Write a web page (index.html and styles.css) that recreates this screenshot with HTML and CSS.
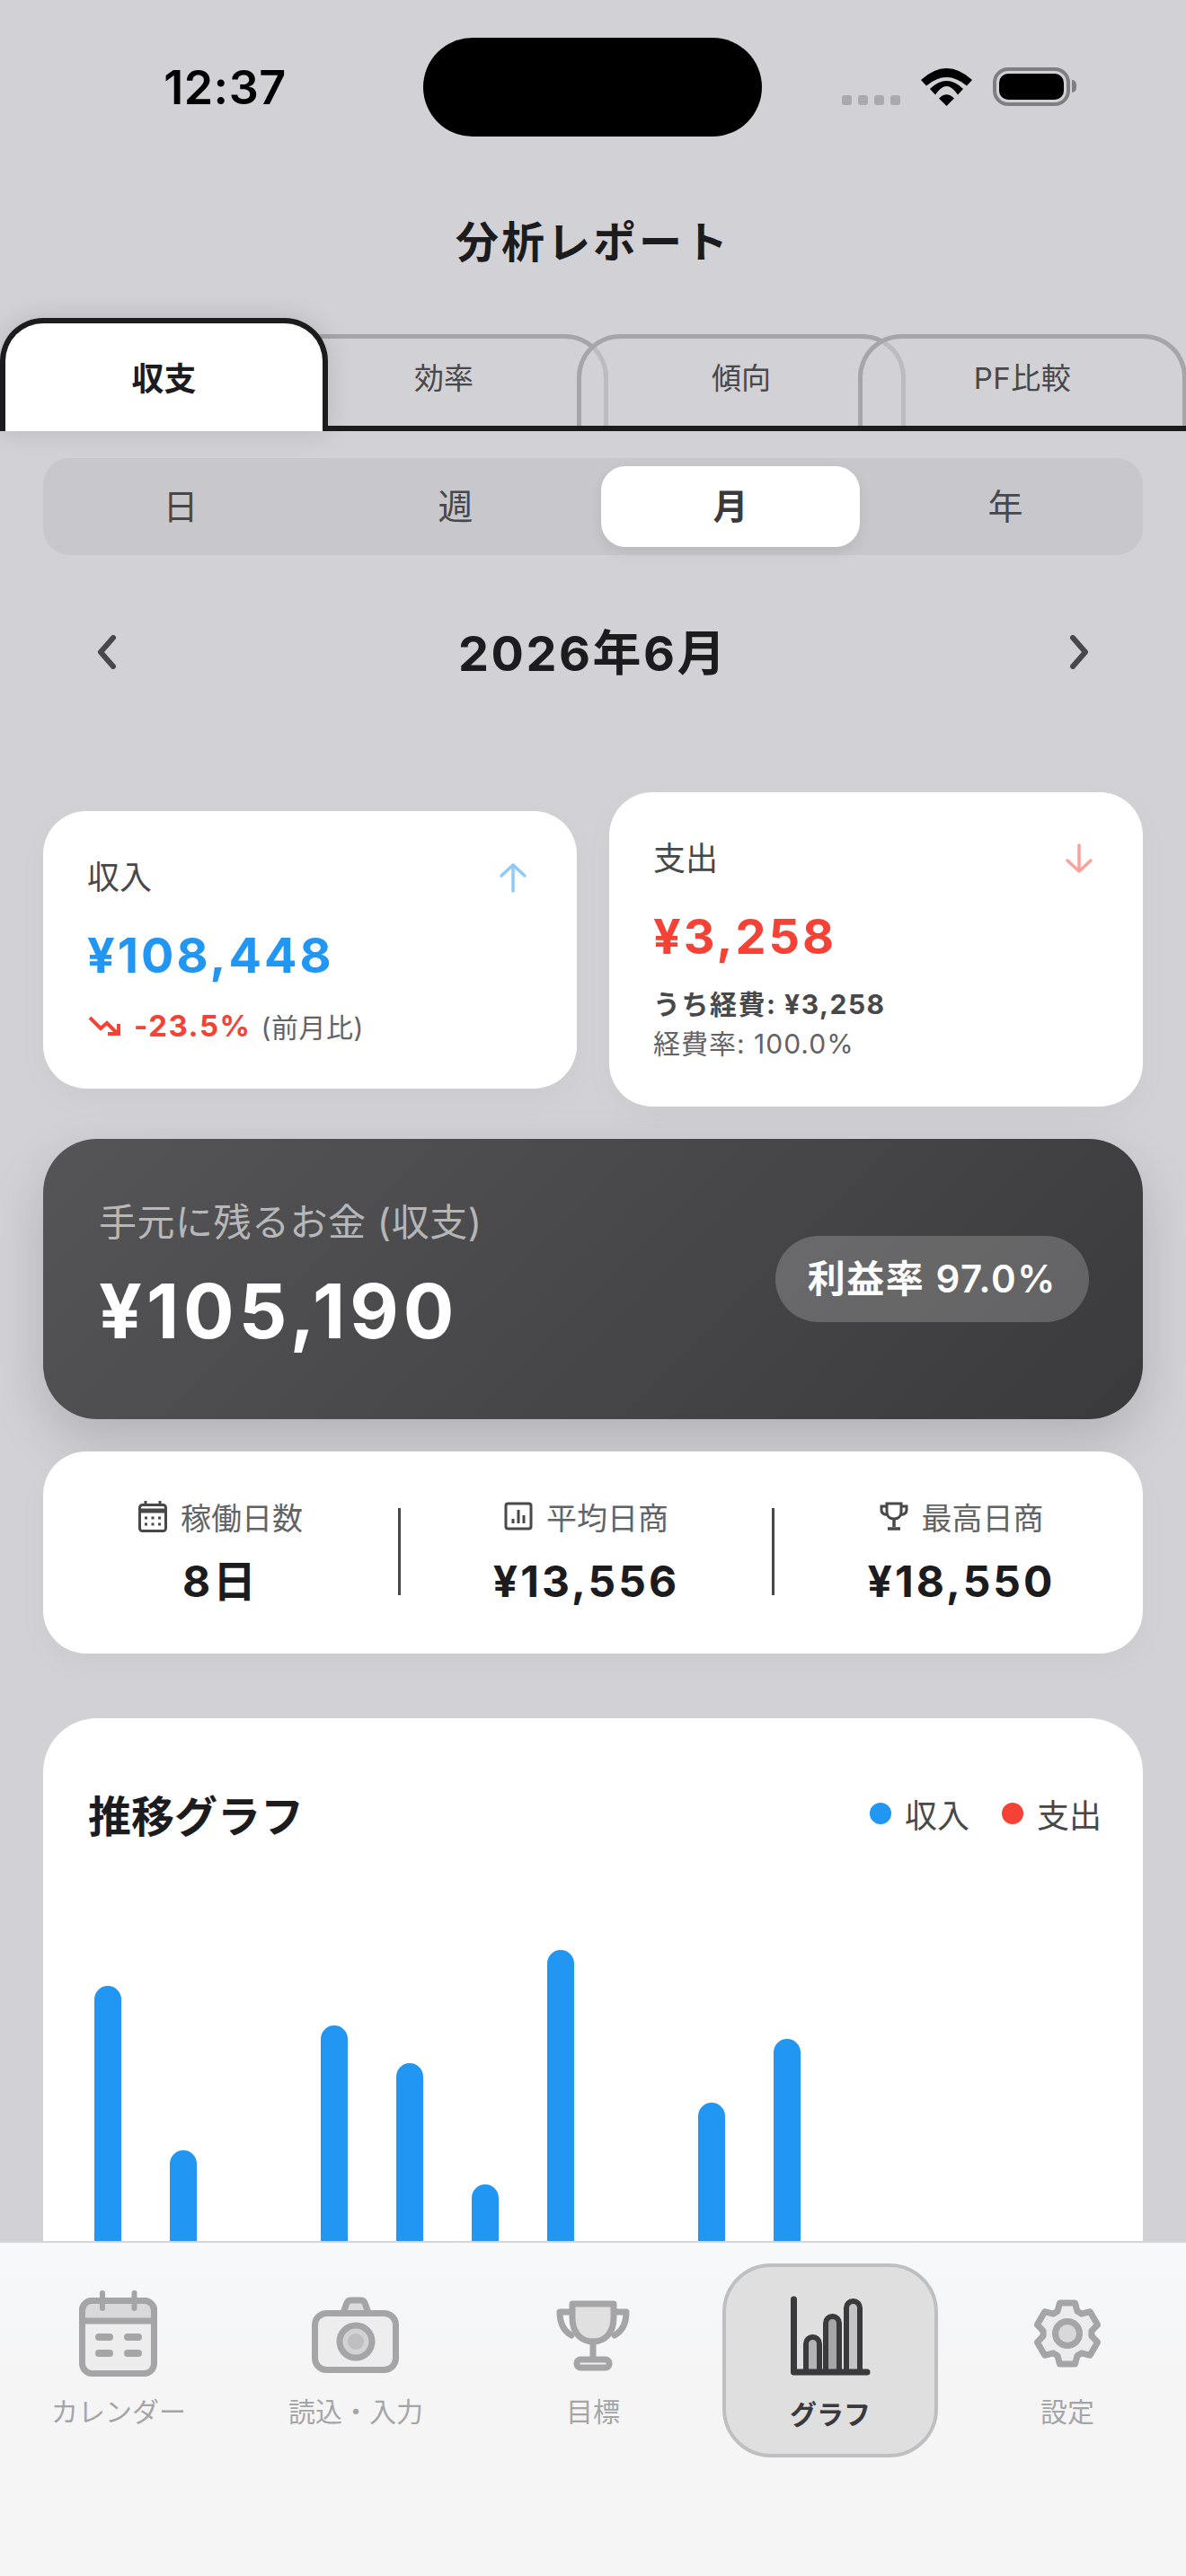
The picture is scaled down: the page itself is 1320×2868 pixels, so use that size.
FILE: index.html
```html
<!DOCTYPE html>
<html lang="ja">
<head>
  <meta charset="UTF-8">
  <meta name="viewport" content="width=device-width, initial-scale=1.0">
  <title>分析レポート</title>
  <link rel="stylesheet" href="styles.css">
</head>
<body>
  <div class="status">
    <div class="time">12:37</div>
    <div class="island"></div>
    <div class="status-icons">
      <div class="signal"><i></i><i></i><i></i><i></i></div>
      <svg class="wifi" width="57" height="42" viewBox="0 0 57 42">
        <path d="M0 13Q28.5 -13 57 13L51 19.5Q28.5 .5 6 19.5Z"/>
        <path d="M10 23Q28.5 5 47 23L41 29.5Q28.5 10.5 16 29.5Z"/>
        <path d="M28.5 42L20 33.5Q28.5 25 37 33.5Z"/>
      </svg>
      <div class="battery"><div class="battery-fill"></div></div>
      <div class="battery-cap"></div>
    </div>
  </div>

  <h1 class="title">分析レポート</h1>

  <div class="tabs">
    <div class="tab active">収支</div>
    <div class="tab tab-2">効率</div>
    <div class="tab tab-3">傾向</div>
    <div class="tab tab-4">PF比較</div>
  </div>

  <div class="content">
    <div class="segment">
      <div class="segment-item">日</div>
      <div class="segment-item">週</div>
      <div class="segment-item selected">月</div>
      <div class="segment-item">年</div>
    </div>

    <div class="month-nav">
      <svg width="22" height="38" viewBox="0 0 22 38" class="chevron"><path d="M18 3L4 19L18 35"/></svg>
      <div class="month">2026年6月</div>
      <svg width="22" height="38" viewBox="0 0 22 38" class="chevron"><path d="M4 3L18 19L4 35"/></svg>
    </div>

    <div class="summary">
      <div class="card">
        <div class="card-head">
          <span class="card-label">収入</span>
          <svg width="32" height="34" viewBox="0 0 32 34" class="arrow arrow-up"><path d="M16 32V3M3 15L16 3L29 15"/></svg>
        </div>
        <div class="amount income">¥108,448</div>
        <div class="trend">
          <svg width="36" height="24" viewBox="0 0 36 24" class="trend-icon"><path d="M2 3L14 15L21 9L32 20M22 21H34V10"/></svg>
          <span class="trend-value">-23.5%</span>
          <span class="trend-note">(前月比)</span>
        </div>
      </div>
      <div class="card">
        <div class="card-head">
          <span class="card-label">支出</span>
          <svg width="32" height="34" viewBox="0 0 32 34" class="arrow arrow-down"><path d="M16 2V31M3 19L16 31L29 19"/></svg>
        </div>
        <div class="amount expense">¥3,258</div>
        <div class="sub-strong">うち経費: ¥3,258</div>
        <div class="sub-light">経費率: 100.0%</div>
      </div>
    </div>

    <div class="balance">
      <div class="balance-text">
        <div class="balance-label">手元に残るお金 (収支)</div>
        <div class="balance-value">¥105,190</div>
      </div>
      <div class="balance-pill">利益率 97.0%</div>
    </div>

    <div class="stats">
      <div class="stat">
        <div class="stat-label">
          <svg width="32" height="36" viewBox="0 0 32 36" class="stat-icon">
            <rect x="1.5" y="5.5" width="29" height="29" rx="3"/>
            <path d="M1.5 12H30.5" stroke-width="5"/>
            <path d="M8 1V7M24 1V7"/>
            <path d="M7 20H10M14.5 20H17.5M22 20H25M7 27H10M14.5 27H17.5M22 27H25" stroke-width="3"/>
          </svg>
          稼働日数
        </div>
        <div class="stat-value">8日</div>
      </div>
      <div class="divider"></div>
      <div class="stat">
        <div class="stat-label">
          <svg width="32" height="32" viewBox="0 0 32 32" class="stat-icon">
            <rect x="2" y="2" width="28" height="28" rx="2.5"/>
            <path d="M10 24V19M16 24V9M22 24V15" stroke-width="3"/>
          </svg>
          平均日商
        </div>
        <div class="stat-value">¥13,556</div>
      </div>
      <div class="divider"></div>
      <div class="stat">
        <div class="stat-label">
          <svg width="32" height="32" viewBox="0 0 32 32" class="stat-icon">
            <path d="M8 2H24V11C24 16 21 19 16 19C11 19 8 16 8 11Z"/>
            <path d="M8 5H2V9C2 12 4 14 8 14.5M24 5H30V9C30 12 28 14 24 14.5"/>
            <path d="M16 19V28M9 30H23" stroke-width="3.5"/>
          </svg>
          最高日商
        </div>
        <div class="stat-value">¥18,550</div>
      </div>
    </div>

    <div class="chart-card">
      <div class="chart-head">
        <h2 class="chart-title">推移グラフ</h2>
        <div class="legend">
          <span class="legend-item"><i class="dot dot-blue"></i>収入</span>
          <span class="legend-item"><i class="dot dot-red"></i>支出</span>
        </div>
      </div>
      <div class="bars">
        <div class="bar" style="height: 488px"></div>
        <div class="bar" style="height: 305px"></div>
        <div class="bar" style="height: 0"></div>
        <div class="bar" style="height: 444px"></div>
        <div class="bar" style="height: 402px"></div>
        <div class="bar" style="height: 267px"></div>
        <div class="bar" style="height: 528px"></div>
        <div class="bar" style="height: 0"></div>
        <div class="bar" style="height: 358px"></div>
        <div class="bar" style="height: 429px"></div>
      </div>
    </div>
  </div>

  <div class="nav">
    <div class="nav-item">
      <svg width="100" height="100" viewBox="0 0 100 100" class="nav-icon">
        <rect x="9.5" y="11.5" width="80" height="81" rx="11" fill="#ededee"/>
        <path d="M9.5 34V22.5C9.5 16 15 11.5 20.5 11.5H78.5C84 11.5 89.5 16 89.5 22.5V34Z" fill="#d9d9db"/>
        <path d="M32 3V20M67.5 3V20" stroke-width="6"/>
        <path d="M28 52H40M60 52H72M28 70H40M60 70H72" stroke-width="8"/>
      </svg>
      <span>カレンダー</span>
    </div>
    <div class="nav-item">
      <svg width="100" height="100" viewBox="0 0 100 100" class="nav-icon">
        <path d="M36 25L40 14Q41 11 45 11H55Q59 11 60 14L64 25" fill="#dcdcde"/>
        <rect x="4.5" y="25.5" width="90" height="63" rx="13" fill="#ededee"/>
        <circle cx="50" cy="57" r="18" fill="#d2d2d4"/>
        <circle cx="50" cy="57" r="9" fill="#bfbfc1" stroke="none"/>
      </svg>
      <span>読込・入力</span>
    </div>
    <div class="nav-item">
      <svg width="100" height="100" viewBox="0 0 100 100" class="nav-icon">
        <path d="M27 15H73V30C73 48 63 57 50 57C37 57 27 48 27 30Z" fill="#e0e0e1"/>
        <path d="M26 24H13C13 36 17 45 26 50M74 24H87C87 36 83 45 74 50"/>
        <path d="M50 57V77"/>
        <rect x="32" y="77" width="36" height="9" rx="4" fill="#f0f0f0"/>
      </svg>
      <span>目標</span>
    </div>
    <div class="nav-item current">
      <svg width="100" height="100" viewBox="0 0 100 100" class="nav-icon">
        <path d="M23 91V59.5A7.5 7.5 0 0 1 38 59.5V91Z" fill="#b3b3b5" stroke-width="6"/>
        <path d="M45 91V36.5A7.5 7.5 0 0 1 60 36.5V91Z" fill="#a5a5a7" stroke-width="6"/>
        <path d="M68 91V19.5A7.5 7.5 0 0 1 83 19.5V91Z" fill="#c4c4c6" stroke-width="6"/>
        <path d="M9.5 10V91H91"/>
      </svg>
      <span>グラフ</span>
    </div>
    <div class="nav-item">
      <svg width="100" height="100" viewBox="0 0 100 100" class="nav-icon">
        <path d="M41.5 14L58.5 14L61 23.3L65.9 26.2L75.2 23.7L83.6 38.3L76.9 45.2L76.9 50.8L83.6 57.7L75.2 72.3L65.9 69.8L61 72.7L58.5 82L41.5 82L39 72.7L34.1 69.8L24.8 72.3L16.4 57.7L23.1 50.8L23.1 45.2L16.4 38.3L24.8 23.7L34.1 26.2L39 23.3Z" fill="#ececed"/>
        <circle cx="50" cy="48" r="13.5" fill="#d8d8da"/>
      </svg>
      <span>設定</span>
    </div>
  </div>
</body>
</html>
```

FILE: styles.css
```css
* {
  box-sizing: border-box;
}

body {
  margin: 0;
  width: 1320px;
  height: 2868px;
  overflow: hidden;
  position: relative;
  background-color: #d1d1d6;
  color: #1c1c1e;
  font-family: Inter, "Noto Sans CJK JP", sans-serif;
}

/* status bar */
.status {
  display: grid;
  grid-template-columns: 471px 377px 1fr;
  align-items: center;
  height: 110px;
  margin-top: 42px;
}

.time {
  text-align: center;
  font-size: 52px;
  font-weight: 600;
  color: #000;
  padding-left: 30px;
  letter-spacing: 0.5px;
}

.island {
  height: 110px;
  background: #000;
  border-radius: 55px;
}

.status-icons {
  display: flex;
  align-items: flex-end;
  height: 43px;
  padding-left: 89px;
  margin-top: -1px;
}

.signal {
  display: flex;
  gap: 7px;
  margin-bottom: 1px;
}

.signal i {
  width: 11px;
  height: 11px;
  border-radius: 3px;
  background: #a9a9ae;
}

.wifi {
  margin-left: 23px;
  fill: #000;
}

.battery {
  width: 86px;
  height: 43px;
  margin-left: 23px;
  padding: 3px;
  border: 4px solid #7f7f83;
  border-radius: 17px;
}

.battery-fill {
  height: 100%;
  background: #000;
  border-radius: 10px;
}

.battery-cap {
  width: 5px;
  height: 14px;
  margin: 0 0 15px 2px;
  background: #7f7f83;
  border-radius: 0 7px 7px 0;
}

.title {
  height: 60px;
  margin: 88px 0 54px;
  text-align: center;
  font-size: 48px;
  line-height: 60px;
  font-weight: 700;
  letter-spacing: 3px;
}

/* folder tabs */
.tabs {
  display: flex;
  align-items: flex-start;
  height: 126px;
  background: linear-gradient(#1c1c1e, #1c1c1e) bottom / 100% 6px no-repeat;
}

.tab {
  flex: none;
  width: 366px;
  height: 102px;
  margin-top: 18px;
  padding-top: 24px;
  text-align: center;
  font-size: 33px;
  line-height: 40px;
  color: #48484a;
  background: rgba(209, 209, 214, 0.5);
  border: 5px solid #a6a6aa;
  border-bottom: none;
  border-radius: 48px 48px 0 0;
}

.tab.active {
  position: relative;
  z-index: 2;
  width: 365px;
  height: 126px;
  margin-top: 0;
  padding-top: 42px;
  font-size: 36px;
  font-weight: 700;
  color: #1c1c1e;
  background: #fff;
  border: 6px solid #1c1c1e;
  border-bottom: none;
  box-shadow: 0 0 30px rgba(0, 0, 0, 0.12);
}

.tab-2 {
  margin-left: -54px;
}

.tab-3 {
  margin-left: -35px;
}

.tab-4 {
  margin-left: -53px;
  letter-spacing: 0.5px;
}

.content {
  padding: 30px 48px 0;
}

/* day / week / month / year */
.segment {
  display: grid;
  grid-template-columns: repeat(4, 306px);
  height: 108px;
  background: #c7c7cc;
  border-radius: 30px;
}

.segment-item {
  margin: 9px;
  text-align: center;
  font-size: 39px;
  line-height: 90px;
  color: #48484a;
  border-radius: 27px;
}

.segment-item.selected {
  background: #fff;
  color: #3a3a3c;
  font-weight: 700;
  box-shadow: 0 6px 15px rgba(0, 0, 0, 0.08);
}

.month-nav {
  display: flex;
  justify-content: space-between;
  align-items: center;
  height: 108px;
  margin: 54px 0 102px;
  padding: 0 60px;
}

.chevron {
  fill: none;
  stroke: #48484a;
  stroke-width: 6;
  stroke-linecap: round;
  stroke-linejoin: round;
}

.month {
  font-size: 54px;
  font-weight: 700;
  letter-spacing: 2.5px;
  margin-top: -6px;
}

/* income / expense */
.summary {
  display: flex;
  align-items: center;
  gap: 36px;
}

.card {
  flex: 1;
  padding: 54px 55px 50px 49px;
  background: #fff;
  border-radius: 48px;
  box-shadow: 0 12px 36px rgba(0, 0, 0, 0.03);
}

.card-head {
  display: flex;
  justify-content: space-between;
  align-items: center;
  height: 40px;
}

.card-label {
  font-size: 36px;
  color: #48484a;
  margin-top: -6px;
}

.arrow {
  fill: none;
  stroke-width: 3.5;
  stroke-linecap: round;
  stroke-linejoin: round;
}

.arrow-up {
  stroke: #90caf9;
}

.arrow-down {
  stroke: #f9a29c;
}

.amount {
  margin-top: 37px;
  font-size: 54px;
  line-height: 60px;
  font-weight: 700;
  letter-spacing: 3px;
}

.income {
  color: #2196f3;
}

.expense {
  color: #f44336;
}

.trend {
  display: flex;
  align-items: center;
  height: 40px;
  margin-top: 28px;
}

.trend-icon {
  fill: none;
  stroke: #f44336;
  stroke-width: 4;
  margin-left: 1px;
}

.trend-value {
  margin-left: 15px;
  font-size: 33px;
  font-weight: 700;
  letter-spacing: 1.5px;
  color: #f44336;
}

.trend-note {
  margin-left: 11px;
  font-size: 30px;
  letter-spacing: 0.5px;
  color: #636366;
}

.sub-strong,
.sub-light {
  font-size: 30px;
  line-height: 40px;
  color: #48484a;
  letter-spacing: 1px;
}

.sub-strong {
  margin-top: 25px;
  font-weight: 700;
  letter-spacing: 1.5px;
}

.sub-light {
  margin-top: 4px;
  color: #636366;
}

/* dark balance card */
.balance {
  display: flex;
  justify-content: space-between;
  align-items: center;
  margin-top: 36px;
  padding: 68px 60px 68px 62px;
  color: #fff;
  background: linear-gradient(135deg, #555557, #3a3a3c);
  border-radius: 60px;
  box-shadow: 0 24px 60px rgba(0, 0, 0, 0.15);
}

.balance-text {
  padding-bottom: 7px;
}

.balance-label {
  font-size: 42px;
  line-height: 50px;
  letter-spacing: 0.5px;
  color: rgba(255, 255, 255, 0.6);
}

.balance-value {
  margin-top: 29px;
  font-size: 84px;
  line-height: 90px;
  font-weight: 700;
  letter-spacing: 5px;
}

.balance-pill {
  height: 96px;
  padding: 0 36px;
  font-size: 42px;
  line-height: 96px;
  font-weight: 600;
  letter-spacing: 1.5px;
  background: rgba(255, 255, 255, 0.2);
  border-radius: 48px;
}

/* stats row */
.stats {
  display: grid;
  grid-template-columns: 395px 3px 413px 3px 1fr;
  align-items: center;
  margin-top: 36px;
  padding: 52px 0 54px;
  background: #fff;
  border-radius: 48px;
  box-shadow: 0 12px 36px rgba(0, 0, 0, 0.03);
}

.stat {
  text-align: center;
}

.stat:last-child {
  padding-left: 6px;
}

.stat-label {
  display: flex;
  justify-content: center;
  align-items: center;
  gap: 15px;
  height: 40px;
  font-size: 34px;
  color: #636366;
}

.stat-icon {
  fill: none;
  stroke: #48484a;
  stroke-width: 3;
}

.stat-value {
  height: 60px;
  padding-top: 4px;
  margin-top: 19px;
  font-size: 48px;
  line-height: 60px;
  font-weight: 700;
  letter-spacing: 3px;
}

.divider {
  height: 97px;
  background: #48484a;
}

/* chart, runs on under the tab bar */
.chart-card {
  margin-top: 72px;
  height: 900px;
  padding: 76px 46px 0 50px;
  background: #fff;
  border-radius: 60px;
}

.chart-head {
  display: flex;
  justify-content: space-between;
  align-items: center;
  height: 60px;
}

.chart-title {
  margin: 0;
  font-size: 48px;
  font-weight: 700;
}

.legend {
  display: flex;
  gap: 36px;
}

.legend-item {
  display: flex;
  align-items: center;
  gap: 15px;
  font-size: 36px;
  color: #48484a;
}

.dot {
  width: 24px;
  height: 24px;
  border-radius: 50%;
}

.dot-blue {
  background: #2196f3;
}

.dot-red {
  background: #f44336;
}

.bars {
  display: flex;
  align-items: flex-end;
  gap: 54px;
  height: 600px;
  margin: 50px 0 0 7px;
}

.bar {
  width: 30px;
  background: #2196f3;
  border-radius: 15px 15px 0 0;
}

/* bottom tab bar */
.nav {
  position: absolute;
  left: 0;
  bottom: 0;
  display: grid;
  grid-template-columns: repeat(5, 264px);
  width: 1320px;
  height: 373px;
  padding-top: 23px;
  background: linear-gradient(#f6f8fa, #f5f5f6 40%, #f5f5f5);
  border-top: 2px solid #d5d5d8;
}

.nav-item {
  display: flex;
  flex-direction: column;
  align-items: center;
  height: 216px;
  margin: 0 12px;
  padding-top: 26px;
  font-size: 30px;
  line-height: 40px;
  color: #a5a5a8;
  border: 4px solid transparent;
  border-radius: 54px;
}

.nav-item span {
  margin-top: 15px;
}

.nav-icon {
  fill: none;
  stroke: #a5a5a7;
  stroke-width: 7;
  stroke-linecap: round;
  stroke-linejoin: round;
}

.nav-item.current {
  color: #3a3a3c;
  font-weight: 700;
  background: #dfdfe0;
  border-color: #bfbfc1;
}

.nav-item.current .nav-icon {
  stroke: #3a3a3c;
}

.nav-item.current span {
  margin-top: 18px;
}
```
